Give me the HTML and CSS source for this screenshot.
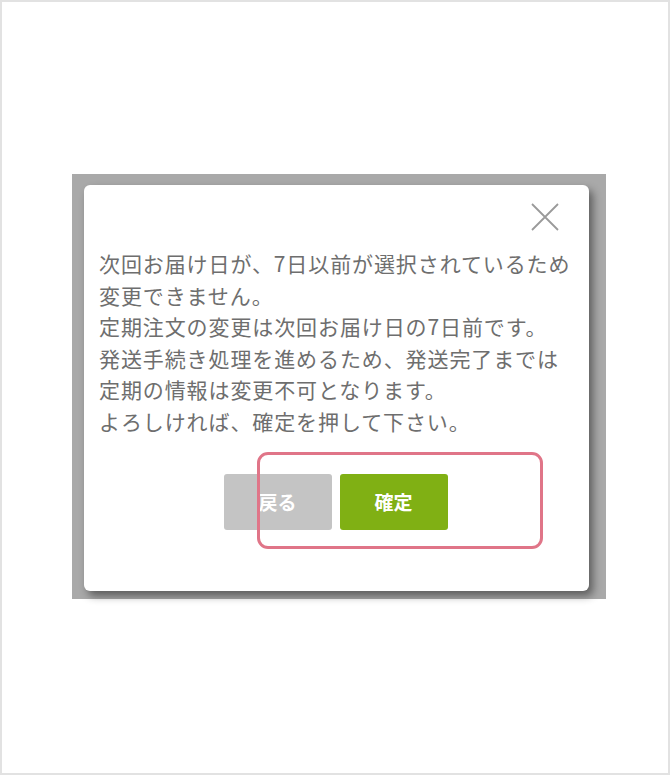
FILE: index.html
```html
<!DOCTYPE html>
<html lang="ja">
<head>
    <meta charset="UTF-8">
    <meta name="viewport" content="width=device-width, initial-scale=1.0">
    <title>定期注文の変更</title>
    <link rel="stylesheet" href="styles.css">
</head>
<body>
    <div class="frame">
        <div class="overlay">
            <div class="modal">
                <div class="modal-head">
                    <button class="close-btn" aria-label="閉じる">
                        <svg width="28" height="28" viewBox="0 0 28 28">
                            <path d="M1 1 L27 27 M27 1 L1 27" stroke="#9a9a9a" stroke-width="1.8" fill="none"/>
                        </svg>
                    </button>
                </div>
                <p class="message">
                    次回お届け日が、7日以前が選択されているため<br>
                    変更できません。<br>
                    定期注文の変更は次回お届け日の7日前です。<br>
                    発送手続き処理を進めるため、発送完了までは<br>
                    定期の情報は変更不可となります。<br>
                    よろしければ、確定を押して下さい。
                </p>
                <div class="actions">
                    <button class="btn btn-back">戻る</button>
                    <button class="btn btn-ok">確定</button>
                </div>
                <div class="highlight"></div>
            </div>
        </div>
    </div>
</body>
</html>
```

FILE: styles.css
```css
body {
    margin: 0;
    padding: 0;
    background-color: #fff;
    font-family: "Noto Sans CJK JP", "Noto Sans", sans-serif;
}

.frame {
    width: 670px;
    height: 775px;
    box-sizing: border-box;
    border: 2px solid #e2e2e2;
    padding: 172px 0 0 70px;
}

.overlay {
    width: 534px;
    height: 425px;
    box-sizing: border-box;
    background-color: #a9a9a9;
    padding: 11px 17px 8px 12px;
}

.modal {
    position: relative;
    height: 406px;
    box-sizing: border-box;
    background-color: #fff;
    border-radius: 6px;
    box-shadow: 4px 5px 9px rgba(0, 0, 0, 0.45);
    padding: 18px 15px 0 15px;
}

.modal-head {
    display: flex;
    justify-content: flex-end;
    padding-right: 15px;
}

.close-btn {
    background: none;
    border: none;
    padding: 0;
    width: 28px;
    height: 28px;
    cursor: pointer;
}

.close-btn svg {
    display: block;
}

.message {
    margin: 17px 0 0 0;
    font-size: 21px;
    line-height: 31.6px;
    letter-spacing: 0.9px;
    color: #6e6e6e;
    white-space: nowrap;
}

.actions {
    display: flex;
    justify-content: center;
    gap: 8px;
    margin-top: 36px;
    padding-right: 2px;
}

.btn {
    width: 108px;
    height: 56px;
    border: none;
    border-radius: 3px;
    color: #fff;
    font-family: "Noto Sans CJK JP", sans-serif;
    font-size: 19px;
    font-weight: bold;
    cursor: pointer;
}

.btn-back {
    background-color: #c4c4c4;
}

.btn-ok {
    background-color: #80b014;
}

.highlight {
    position: absolute;
    left: 173px;
    top: 267px;
    width: 286px;
    height: 97px;
    box-sizing: border-box;
    border: 3px solid #e07588;
    border-radius: 11px;
    pointer-events: none;
}
```
